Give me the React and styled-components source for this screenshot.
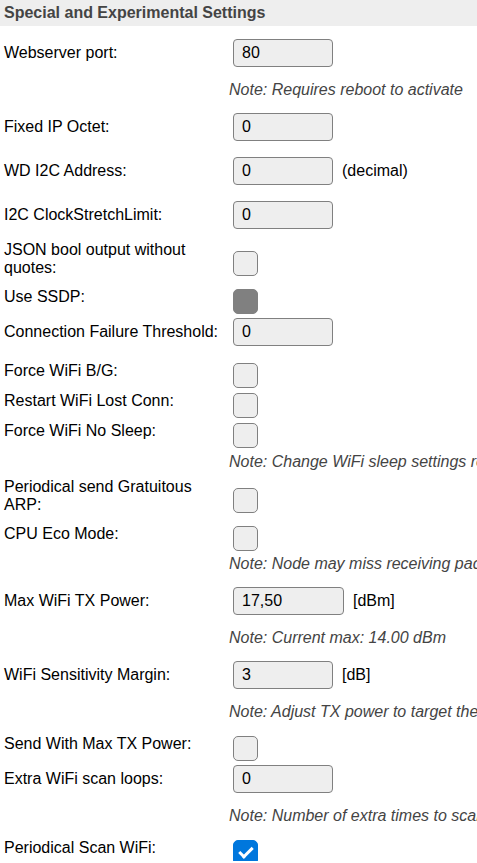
import React from 'react';
import styled, { createGlobalStyle, css } from 'styled-components';

const Global = createGlobalStyle`
  html, body { margin: 0; padding: 0; background: #fff; overflow: hidden; }
  body {
    font-family: "Liberation Sans", Arial, sans-serif;
    font-size: 16px;
    color: #000;
  }
`;

const Page = styled.div`
  width: 477px;
  overflow: hidden;
`;

const Header = styled.h3`
  margin: 0 0 5px;
  padding: 4px;
  height: 26px;
  box-sizing: border-box;
  background: #eee;
  color: #444;
  font-size: 16px;
  font-weight: bold;
  line-height: 18px;
  white-space: nowrap;
`;

const Row = styled.div`
  display: grid;
  grid-template-columns: 229px 1fr;
  align-items: center;
  height: ${(p) => p.$h}px;
`;

const Label = styled.div`
  padding: 0 4px;
  line-height: 18px;
`;

const Value = styled.div`
  display: flex;
  align-items: center;
  white-space: nowrap;
`;

const Input = styled.input`
  margin: 4px;
  padding: 4px 8px;
  width: ${(p) => p.$w || 100}px;
  height: 28px;
  box-sizing: border-box;
  border: 1px solid gray;
  border-radius: 4px;
  background: #eee;
  color: #000;
  font: 16px "Liberation Sans", Arial, sans-serif;
  outline: none;
`;

const Unit = styled.span`
  margin-left: 5px;
`;

const Note = styled.div`
  font-style: italic;
  color: #444;
  white-space: nowrap;
  line-height: 18px;
  padding-top: ${(p) => p.$shift || 0}px;
`;

const Check = styled.span`
  position: relative;
  display: block;
  width: 25px;
  height: 25px;
  box-sizing: border-box;
  margin: 9px 0 0 4px;
  border-radius: 5px;
  border: 1px solid gray;
  background: #eee;
  ${(p) =>
    p.$disabled &&
    css`
      background: gray;
      border-color: gray;
    `}
  ${(p) =>
    p.$checked &&
    css`
      background: #07d;
      border-color: #07d;
      &::after {
        content: "";
        position: absolute;
        left: 8px;
        top: 3px;
        width: 5px;
        height: 11px;
        border: solid #fff;
        border-width: 0 3px 3px 0;
        transform: rotate(45deg);
      }
    `}
`;

const rows = [
  { t: 'input', label: 'Webserver port:', value: '80' },
  { t: 'note', text: 'Note: Requires reboot to activate' },
  { t: 'input', label: 'Fixed IP Octet:', value: '0' },
  { t: 'input', label: 'WD I2C Address:', value: '0', unit: '(decimal)' },
  { t: 'input', label: 'I2C ClockStretchLimit:', value: '0' },
  { t: 'check', label: 'JSON bool output without quotes:', h: 43 },
  { t: 'check', label: 'Use SSDP:', disabled: true },
  { t: 'input', label: 'Connection Failure Threshold:', value: '0' },
  { t: 'check', label: 'Force WiFi B/G:' },
  { t: 'check', label: 'Restart WiFi Lost Conn:' },
  { t: 'check', label: 'Force WiFi No Sleep:' },
  { t: 'note', text: 'Note: Change WiFi sleep settings requires reboot to activate', shift: 6 },
  { t: 'check', label: 'Periodical send Gratuitous ARP:', h: 43 },
  { t: 'check', label: 'CPU Eco Mode:' },
  { t: 'note', text: 'Note: Node may miss receiving packets with Eco mode enabled', h: 32, shift: 2 },
  { t: 'input', label: 'Max WiFi TX Power:', value: '17,50', unit: '[dBm]', w: 111 },
  { t: 'note', text: 'Note: Current max: 14.00 dBm' },
  { t: 'input', label: 'WiFi Sensitivity Margin:', value: '3', unit: '[dB]' },
  { t: 'note', text: 'Note: Adjust TX power to target the AP with (sensitivity + margin) dBm signal strength' },
  { t: 'check', label: 'Send With Max TX Power:' },
  { t: 'input', label: 'Extra WiFi scan loops:', value: '0' },
  { t: 'note', text: 'Note: Number of extra times to scan all channels to have higher chance of finding the desired AP' },
  { t: 'check', label: 'Periodical Scan WiFi:', checked: true },
];

export default function App() {
  return (
    <Page>
      <Global />
      <Header>Special and Experimental Settings</Header>
      {rows.map((r, i) => {
        if (r.t === 'note') {
          return (
            <Row key={i} $h={r.h || 30}>
              <Label />
              <Note $shift={r.shift}>{r.text}</Note>
            </Row>
          );
        }
        if (r.t === 'input') {
          return (
            <Row key={i} $h={44}>
              <Label>{r.label}</Label>
              <Value>
                <Input $w={r.w} defaultValue={r.value} readOnly />
                {r.unit && <Unit>{r.unit}</Unit>}
              </Value>
            </Row>
          );
        }
        return (
          <Row key={i} $h={r.h || 30}>
            <Label>{r.label}</Label>
            <Value>
              <Check $checked={r.checked} $disabled={r.disabled} />
            </Value>
          </Row>
        );
      })}
    </Page>
  );
}
